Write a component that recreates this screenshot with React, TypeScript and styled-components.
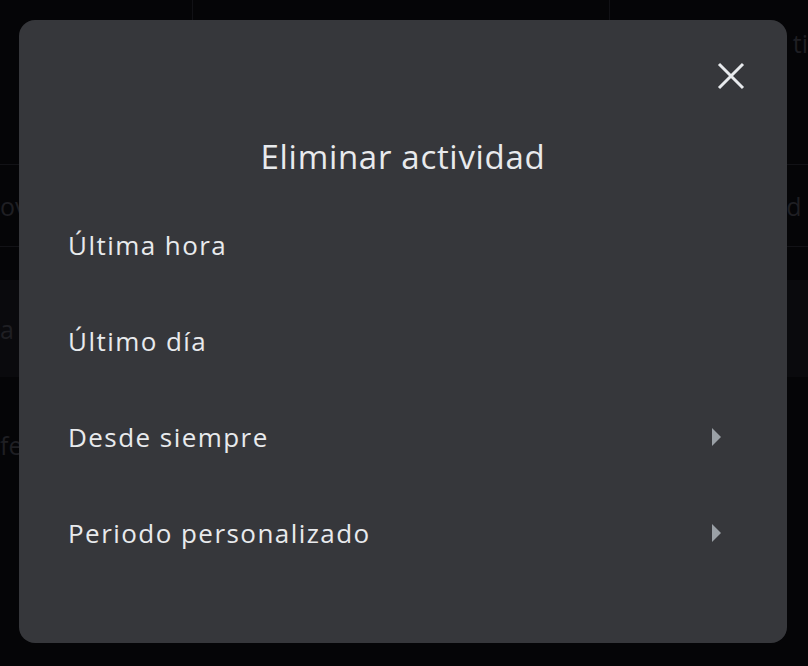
import React from "react";
import styled, { createGlobalStyle } from "styled-components";

const Global = createGlobalStyle`
  html, body { margin: 0; padding: 0; background: #050507; }
  body { font-family: "Open Sans", "Roboto", sans-serif; }
`;

const Page = styled.div`
  position: relative;
  width: 808px;
  height: 666px;
  overflow: hidden;
  background: #050507;
`;

const Table = styled.div`
  display: flex;
  flex-direction: column;
`;

const Row = styled.div<{ $h: number; $bg?: string; $line?: boolean }>`
  display: grid;
  grid-template-columns: 193px 417px 198px;
  height: ${(p) => p.$h}px;
  background: ${(p) => p.$bg || "transparent"};
  border-bottom: ${(p) => (p.$line ? "1px solid #121216" : "none")};
  box-sizing: border-box;
`;

const Cell = styled.div<{ $right?: boolean; $divider?: boolean }>`
  display: flex;
  align-items: center;
  justify-content: ${(p) => (p.$right ? "flex-end" : "flex-start")};
  border-right: ${(p) => (p.$divider ? "1px solid #111115" : "none")};
  color: #1f1f23;
  font-size: 25px;
  overflow: hidden;
  white-space: nowrap;
`;

const Overlay = styled.div`
  position: absolute;
  left: 19px;
  top: 20px;
`;

const Dialog = styled.div`
  width: 768px;
  height: 623px;
  box-sizing: border-box;
  background: #36373b;
  border-radius: 16px;
  padding: 32px 32px 62px 0;
  display: flex;
  flex-direction: column;
`;

const CloseRow = styled.div`
  display: flex;
  justify-content: flex-end;
`;

const CloseButton = styled.button`
  width: 48px;
  height: 48px;
  border: none;
  background: transparent;
  padding: 0;
  display: flex;
  align-items: center;
  justify-content: center;
  cursor: pointer;
`;

const Title = styled.h2`
  margin: 37px 0 0 32px;
  height: 40px;
  line-height: 40px;
  text-align: center;
  font-weight: 400;
  font-size: 33px;
  letter-spacing: 0.7px;
  color: #e8eaed;
`;

const List = styled.div`
  margin-top: 20px;
  display: flex;
  flex-direction: column;
`;

const Item = styled.div`
  height: 96px;
  display: flex;
  align-items: center;
  justify-content: space-between;
  padding: 0 34px 0 49px;
  font-size: 26px;
  font-weight: 500;
  color: #e8eaed;
  letter-spacing: 1.45px;
`;

const Arrow = styled.span`
  width: 0;
  height: 0;
  border-top: 9px solid transparent;
  border-bottom: 9px solid transparent;
  border-left: 9px solid #9aa0a6;
`;

const items: { label: string; sub: boolean }[] = [
  { label: "Última hora", sub: false },
  { label: "Último día", sub: false },
  { label: "Desde siempre", sub: true },
  { label: "Periodo personalizado", sub: true },
];

export default function App() {
  return (
    <Page>
      <Global />
      <Table>
        <Row $h={165} $line>
          <Cell $divider />
          <Cell $divider />
          <Cell $right style={{ alignItems: "flex-start", paddingTop: 26 }}>
            ti
          </Cell>
        </Row>
        <Row $h={82} $line>
          <Cell>ov</Cell>
          <Cell />
          <Cell $right>d&nbsp;</Cell>
        </Row>
        <Row $h={33} />
        <Row $h={97} $bg="#0a0a0d">
          <Cell>a</Cell>
          <Cell />
          <Cell />
        </Row>
        <Row $h={135}>
          <Cell>fe</Cell>
          <Cell />
          <Cell />
        </Row>
      </Table>
      <Overlay>
        <Dialog role="dialog">
          <CloseRow>
            <CloseButton aria-label="Cerrar">
              <svg width="28" height="28" viewBox="0 0 28 28">
                <path
                  d="M2 2 L26 26 M26 2 L2 26"
                  stroke="#e8eaed"
                  strokeWidth="3"
                  fill="none"
                />
              </svg>
            </CloseButton>
          </CloseRow>
          <Title>Eliminar actividad</Title>
          <List>
            {items.map((it) => (
              <Item key={it.label}>
                <span>{it.label}</span>
                {it.sub && <Arrow />}
              </Item>
            ))}
          </List>
        </Dialog>
      </Overlay>
    </Page>
  );
}
